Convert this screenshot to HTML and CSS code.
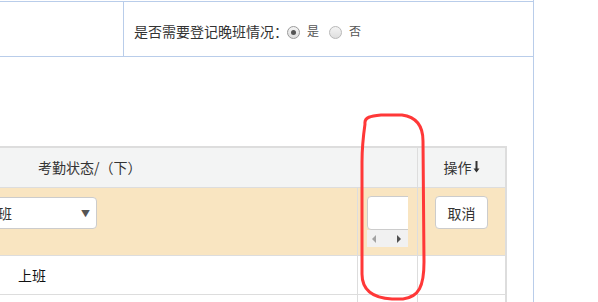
FILE: index.html
```html
<!DOCTYPE html>
<html lang="zh-CN">
<head>
    <meta charset="UTF-8">
    <meta name="viewport" content="width=device-width, initial-scale=1.0">
    <title>考勤登记</title>
    <link rel="stylesheet" href="styles.css">
</head>
<body>
    <div class="page">
        <div class="filter-bar">
            <div class="filter-blank"></div>
            <div class="filter-item">
                <span class="filter-label">是否需要登记晚班情况：</span>
                <span class="radio checked"></span>
                <span class="radio-text">是</span>
                <span class="radio"></span>
                <span class="radio-text">否</span>
            </div>
        </div>

        <div class="grid">
            <div class="grid-row grid-head">
                <div class="cell c-a no-line head-title">考勤状态/（下）</div>
                <div class="cell c-b"></div>
                <div class="cell c-c head-op">
                    操作
                    <svg class="sort-icon" width="7" height="12" viewBox="0 0 7 12">
                        <path d="M3.5 0 V10" stroke="#333" stroke-width="2"/>
                        <path d="M0.5 7.5 L3.5 11.5 L6.5 7.5 Z" fill="#333"/>
                    </svg>
                </div>
            </div>

            <div class="grid-row row-edit">
                <div class="cell c-a">
                    <div class="fake-select">
                        <span>上班</span>
                        <span class="select-arrow">▼</span>
                    </div>
                </div>
                <div class="cell c-b">
                    <div class="scroll-box">
                        <div class="scroll-input"></div>
                        <div class="scroll-bar">
                            <span class="arrow-left"></span>
                            <span class="arrow-right"></span>
                        </div>
                    </div>
                </div>
                <div class="cell c-c">
                    <button class="btn-cancel">取消</button>
                </div>
            </div>

            <div class="grid-row row-data">
                <div class="cell c-a status-text">上班</div>
                <div class="cell c-b"></div>
                <div class="cell c-c"></div>
            </div>

            <div class="grid-row row-data row-last">
                <div class="cell c-a"></div>
                <div class="cell c-b"></div>
                <div class="cell c-c"></div>
            </div>
        </div>

        <!-- hand-drawn annotation -->
        <svg class="mark" width="598" height="302" viewBox="0 0 598 302">
            <path d="M365 124 C364 117 371 116 381 115 L402 115 C417 117 423 127 423 141 L424 262 C424 286 419 297 403 299 L392 299 C373 298 362 290 362 274 L362 162 C362 146 364 131 365 124 Z"
                  fill="none" stroke="#ff3838" stroke-width="3" stroke-linejoin="round"/>
        </svg>
    </div>
</body>
</html>
```

FILE: styles.css
```css
:root {
    --frame-line: #b9cdea;
    --grid-line: #dddddd;
    --head-bg: #f3f4f4;
    --edit-bg: #f9e5c1;
    --text-primary: #333333;
}

* {
    margin: 0;
    padding: 0;
    box-sizing: border-box;
}

html,
body {
    height: 302px;
    overflow: hidden;
}

body {
    font-family: "Noto Sans CJK SC", "Noto Sans", sans-serif;
    font-size: 14px;
    color: var(--text-primary);
    background: white;
}

.page {
    position: relative;
    width: 534px;
    height: 302px;
    overflow: hidden;
    border-right: 1px solid var(--frame-line);
}

.filter-bar {
    display: flex;
    margin-top: 1px;
    height: 56px;
    border-top: 1px solid var(--frame-line);
    border-bottom: 1px solid var(--frame-line);
}

.filter-blank {
    width: 124px;
    border-right: 1px solid var(--frame-line);
}

.filter-item {
    display: flex;
    align-items: center;
    padding-left: 10px;
    padding-top: 3px;
    line-height: 20px;
}

.filter-label {
    margin-right: -1px;
}

.radio {
    width: 13px;
    height: 13px;
    border-radius: 50%;
    border: 1px solid #b8b8b8;
    background: linear-gradient(#f4f4f4, #dedede);
    display: inline-flex;
    align-items: center;
    justify-content: center;
    margin-top: 3px;
}

.radio.checked {
    border-color: #9a9a9a;
}

.radio.checked::after {
    content: "";
    width: 5px;
    height: 5px;
    border-radius: 50%;
    background: #555;
}

.radio-text {
    font-size: 12px;
    color: #555;
    margin: 1px 10px 0 7px;
}

.grid {
    margin-top: 89px;
    width: 507px;
    border-top: 2px solid var(--grid-line);
    border-right: 2px solid var(--grid-line);
}

.grid-row {
    display: flex;
    border-bottom: 1px solid var(--grid-line);
}

.grid-head {
    height: 40px;
    background: var(--head-bg);
}

.row-edit {
    height: 68px;
    background: var(--edit-bg);
}

.row-data {
    height: 39px;
}

.row-data.row-last {
    height: 8px;
    border-bottom: none;
}

.cell {
    border-right: 1px solid var(--grid-line);
}

.cell.no-line {
    border-right: none;
}

.c-a {
    width: 358px;
}

.c-b {
    width: 60px;
}

.c-c {
    flex: 1;
    border-right: none;
}

.head-title {
    display: flex;
    align-items: center;
    padding-left: 38px;
    padding-bottom: 1px;
}

.head-op {
    display: flex;
    align-items: center;
    justify-content: center;
    padding-bottom: 1px;
}

.sort-icon {
    margin-left: 1px;
}

.row-edit .c-a {
    padding-top: 9px;
    overflow: hidden;
}

.fake-select {
    display: flex;
    align-items: center;
    justify-content: space-between;
    margin-left: -29px;
    width: 126px;
    height: 32px;
    padding: 0 6px 0 12px;
    background: white;
    border: 1px solid #cccccc;
    border-radius: 4px;
}

.select-arrow {
    font-size: 9px;
    color: #555;
}

.row-edit .c-b {
    padding: 8px 0 0 9px;
}

.scroll-box {
    width: 41px;
    overflow: hidden;
}

.scroll-input {
    width: 48px;
    height: 34px;
    background: white;
    border: 1px solid #cccccc;
    border-radius: 4px;
}

.scroll-bar {
    display: flex;
    justify-content: space-between;
    align-items: center;
    height: 17px;
    padding: 0 7px 0 5px;
    background: #f1f1f1;
}

.arrow-left {
    width: 0;
    height: 0;
    border-top: 4px solid transparent;
    border-bottom: 4px solid transparent;
    border-right: 4px solid #a3a3a3;
}

.arrow-right {
    width: 0;
    height: 0;
    border-top: 4px solid transparent;
    border-bottom: 4px solid transparent;
    border-left: 4px solid #505050;
}

.row-edit .c-c {
    padding: 8px 0 0 17px;
}

.btn-cancel {
    width: 53px;
    height: 33px;
    font-family: inherit;
    font-size: 14px;
    color: var(--text-primary);
    background: white;
    border: 1px solid #cccccc;
    border-radius: 4px;
}

.status-text {
    display: flex;
    align-items: center;
    padding-left: 18px;
    color: #111;
}

.mark {
    position: absolute;
    top: 0;
    left: 0;
    pointer-events: none;
}
```
